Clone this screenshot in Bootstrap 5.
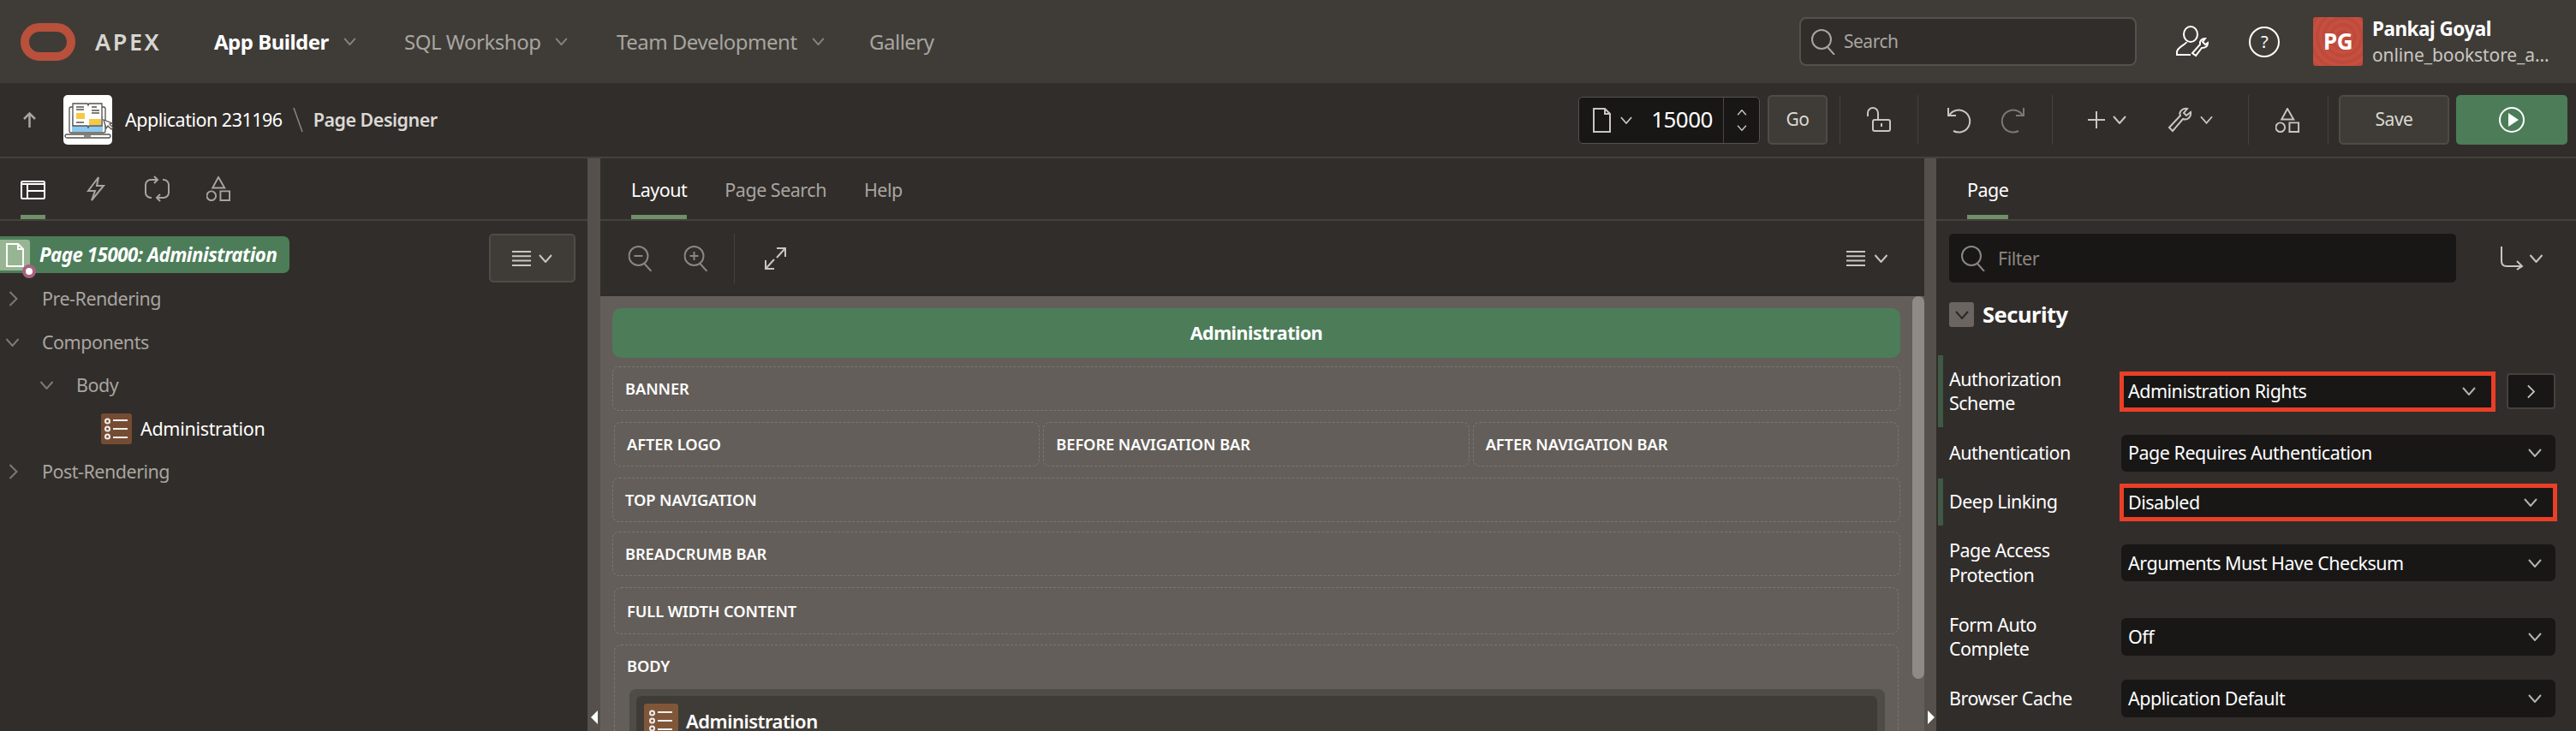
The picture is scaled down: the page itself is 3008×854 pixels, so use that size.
<!doctype html>
<html lang="en"><head><meta charset="utf-8"><title>Page Designer</title>
<link href="https://cdn.jsdelivr.net/npm/bootstrap@5.3.0/dist/css/bootstrap.min.css" rel="stylesheet">
<style>
html,body{height:854px;overflow:hidden}
body{width:3008px;background:#312d2a;color:#fff;font-family:"Noto Sans",sans-serif;font-size:21.5px;line-height:1.3;letter-spacing:-.5px}
svg{display:block;flex:none;fill:none;stroke:currentColor;stroke-width:2;overflow:visible}
a{text-decoration:none}
.apx-top{height:97px;background:#3f3c37;padding:0!important;flex-wrap:nowrap;justify-content:flex-start}
.apx-logo{margin-left:24px;color:#b9503c}
.apx-brand{margin-left:23px;width:139px;font-size:27px;font-weight:600;letter-spacing:2.6px;color:#d7d5d1}
.apx-menu .nav-link{display:flex;align-items:center;gap:17px;padding:0;color:#a8a5a0;font-size:24px}
.apx-menu .nav-link.on{color:#fff;font-weight:700}
.apx-menu .nav-link svg{color:#8a8680}
.w-m1{width:222px}.w-m2{width:248px}.w-m3{width:295px}.w-m4{width:90px}
.apx-search{margin-left:996px;width:394px;height:57px;background:#312d2a;border:2px solid #55514c;border-radius:8px;color:#a8a5a0;padding-left:12px;gap:10px;font-size:21px}
.apx-uico{margin-left:44px;color:#fff}
.apx-help{margin-left:49px;width:36px;height:36px;border:2px solid #fff;border-radius:50%;font-size:20px}
.apx-ava{margin-left:39px;width:58px;height:57px;border-radius:3px;font-size:26px;font-weight:700;background:repeating-radial-gradient(circle at 60% 40%,#c64f3f 0 4px,#bd4a3b 4px 8px)}
.apx-user{margin-left:11px;line-height:30px;width:236px}
.apx-user b{display:block;font-size:22.5px;font-weight:700}
.apx-user span{display:block;font-size:21px;color:#c9c6c2;letter-spacing:-.1px}
.apx-sub{height:88px;background:#312d2a;border-bottom:2px solid #45413d}
.apx-up{margin-left:27px;color:#a8a5a0}
.apx-app{margin-left:32px;width:57px;height:58px;background:#fff;border-radius:5px}
.apx-crumb{margin-left:15px;white-space:nowrap;font-size:21.5px}
.apx-slash{margin:0 12px;color:#8a8680}
.apx-cur{font-weight:600;color:#dbd9d5}
.apx-pg{width:212px;height:55px;background:#181716;border:1px solid #55514c;border-radius:5px;color:#c9c6c2}
.apx-pgnum{margin-left:8px;width:86px;font-size:26px;color:#fff}
.apx-spin{width:42px;height:100%;border-left:1px solid #4a4641;justify-content:space-between;padding:14px 0}
.btn.apx-btn{background:#3f3c37;border:2px solid #4f4b46;border-radius:5px;color:#dbd9d5;font-size:21px;height:58px;padding:0;display:flex;align-items:center;justify-content:center;letter-spacing:-.5px}
.apx-sep{width:1px;height:58px;background:#45413d}
.apx-ic{color:#c9c6c2}
.btn.apx-run{background:#4c7d58;border:0;border-radius:5px;width:130px;height:58px;padding:0;margin-left:8px;color:#fff;display:flex;align-items:center;justify-content:center}
.apx-main{height:669px}
.apx-left{width:686px}.apx-split{width:15px;background:#55504b;align-items:flex-end;padding-bottom:8px}
.apx-split.r{width:14px}
.apx-mid{width:1546px}.apx-right{width:747px}
.apx-tabs{height:73px;border-bottom:2px solid #45413d;padding-bottom:0}
.apx-tab{height:71px;display:flex;align-items:center;color:#a8a5a0;position:relative;padding-top:2px}
.apx-tab.on{color:#fff;border-bottom:5px solid #6f9068;padding-top:7px}
.apx-pill{margin-top:3px;width:338px;height:43px;background:#4c7d58;border-radius:0 7px 7px 0;font-weight:700;font-style:italic;white-space:nowrap;font-size:22.3px}
.apx-pgbox{position:relative;width:35px;height:36px;background:#98b593;border-radius:0 3px 3px 0;margin-right:11px;align-self:center}
.apx-dot{position:absolute;right:-7px;bottom:-9px;width:16px;height:16px;border-radius:50%;background:#fff;border:4px solid #a8617f}
.btn.apx-tool{width:101px;height:57px;margin-left:233px;gap:9px;margin-bottom:-6px;color:#c9c6c2}
.apx-node{height:50.5px;color:#a8a5a0;position:relative}
.apx-node svg{color:#7d7974}
.apx-brown{width:36px;height:36px;background:#754c33;border-radius:3px;color:#eee}
.apx-canvas{height:508px;background:#635e59}
.apx-flow{padding:14px 14px 0;overflow:hidden}
.apx-thumb{width:14px;height:447px;background:#8f8a86;border-radius:7px;flex:none}
.apx-head{height:58px;background:#4c7d58;border-radius:10px;font-weight:700}
.apx-reg{height:52px;border:1px dashed #7b7670;border-radius:8px;padding-left:14px;font-weight:600;font-size:18.3px;white-space:nowrap;letter-spacing:-.1px}
.apx-in{margin-left:2px;margin-right:2px}
.apx-bodybox{height:400px;margin-top:12px;align-items:flex-start;padding-top:12px;flex-direction:column}
.apx-p1{margin:15px 25px 0 3px;width:1466px;background:#4f4b46;border-radius:8px 8px 0 0;padding:8px 9px 0 8px}
.apx-p2{background:#3f3c37;border-radius:6px 6px 0 0;height:100px;padding:9px 0 0 9px;font-size:22px;font-weight:600;letter-spacing:-.5px;align-items:flex-start!important}
.apx-p2 .apx-brown{width:40px;height:40px;background:#805639;margin-right:9px}
.apx-p2 span{margin-top:9px;line-height:22px}
.apx-filter{width:592px;height:57px;background:#181716;border-radius:5px;color:#8a8680;padding-left:14px;gap:15px}
.apx-tog{width:29px;height:29px;background:#6a6560;border-radius:3px;color:#2b2825}
.apx-sec{font-size:25.5px;font-weight:700}
.apx-prop{padding-left:2px;line-height:28.5px}
.apx-bar{width:6px;flex:none;align-self:stretch}
.apx-bar.g{background:#3f5a44}
.apx-lbl{margin-left:7px;width:201px;flex:none}
.form-select.apx-pick{background-image:none;background-color:#181716;border:0;border-radius:6px;color:#fff;height:43px;width:507px;padding:0 16px 0 8px;font-size:21.5px;line-height:28px;box-shadow:none}
.form-select.apx-pick svg{color:#b5b2ad}
.form-select.apx-red{border:5px solid #ea3f27;border-radius:0;margin-left:-2px;padding:0 18px 0 5px}
.apx-go{width:57px;height:42px;background:#181716;border:2px solid #45413d;border-radius:4px;margin-left:13px;color:#c9c6c2}
.apx-hnd{color:#fff}
</style></head>
<body>
<svg width="0" height="0" style="position:absolute"><defs>
<symbol id="chev" viewBox="0 0 16 10"><path d="M1 1l7 8 7-8"/></symbol>
<symbol id="chevr" viewBox="0 0 10 18"><path d="M1 1l8 8-8 8"/></symbol>
<symbol id="mag" viewBox="0 0 28 30"><circle cx="12" cy="12" r="11"/><path d="M19 21l8 9"/></symbol>
<symbol id="burger" viewBox="0 0 22 18"><path d="M0 1h22M0 6.300h22M0 11.600h22M0 17h22"/></symbol>
<symbol id="shapes" viewBox="0 0 30 30"><path d="M14.500 1L22 14H7.500z"/><circle cx="6" cy="23.500" r="5.500"/><path d="M17 18h11v11H17z"/></symbol>
</defs></svg>

<nav class="navbar apx-top">
  <svg class="apx-logo" width="64" height="44" viewBox="0 0 64 44" style="stroke-width:10"><rect x="5" y="5" width="54" height="34" rx="17"/></svg>
  <div class="apx-brand">APEX</div>
  <div class="navbar-nav flex-row apx-menu">
    <a class="nav-link on w-m1" href="#">App Builder <svg width="15" height="9"><use href="#chev"/></svg></a>
    <a class="nav-link w-m2" href="#">SQL Workshop <svg width="15" height="9"><use href="#chev"/></svg></a>
    <a class="nav-link w-m3" href="#">Team Development <svg width="15" height="9"><use href="#chev"/></svg></a>
    <a class="nav-link w-m4" href="#">Gallery</a>
  </div>
  <div class="d-flex align-items-center apx-search"><svg width="28" height="30"><use href="#mag"/></svg><span>Search</span></div>
  <svg class="apx-uico" width="38" height="36" viewBox="0 0 38 36"><ellipse cx="19" cy="9" rx="8" ry="9"/><path d="M14 18c0 3-11 6-11 12v3h16M25 34l-4-3 9-10c-1-4 2-7 6-7l-3 4 3 3 3-2c0 4-3 6-7 6l-7 9z"/></svg>
  <div class="d-flex align-items-center justify-content-center apx-help"><span>?</span></div>
  <div class="d-flex align-items-center justify-content-center apx-ava">PG</div>
  <div class="apx-user"><b>Pankaj Goyal</b><span>online_bookstore_a...</span></div>
</nav>

<header class="d-flex align-items-center apx-sub">
  <svg class="apx-up" width="15" height="18" viewBox="0 0 15 18" style="stroke-width:2.500"><path d="M7.500 18V2M1 8l6.500-6.500L14 8"/></svg>
  <div class="apx-app"><svg width="57" height="58" viewBox="0 0 57 58" style="stroke-width:1.300;color:#55514c">
    <rect x="7" y="14" width="42" height="30" rx="2"/><path fill="#8cc9ee" stroke="none" d="M10 24h36v19H10z"/>
    <path fill="#fff" d="M11 10h17l1 2 1-2h15v26H30l-1 2-1-2H11z"/><path d="M15 14h9M15 17h9M33 14h6M33 18h9M33 21h9M15 32h9M33 37"/>
    <path fill="#f6c945" stroke="none" d="M15 21h10v7H15zM30 28h14v7H30z"/><rect x="2" y="46" width="53" height="4" rx="2"/><path d="M24 48h8"/>
    <path fill="#fff" d="M47 29l3 10 2-3 4 4 2-2-4-4 3-1z"/></svg></div>
  <div class="apx-crumb d-flex align-items-center"><span>Application 231196</span><svg class="apx-slash" width="12" height="28" viewBox="0 0 12 28" style="stroke-width:1.500"><path d="M1 0l10 28"/></svg><span class="apx-cur">Page Designer</span></div>
  <div class="d-flex align-items-center apx-pg ms-auto">
    <svg style="margin-left:16px" width="21" height="29" viewBox="0 0 21 29"><path d="M1 1h13l6 6v21H1zM14 1v6h6"/></svg>
    <svg style="margin-left:11px" width="14" height="9"><use href="#chev"/></svg>
    <span class="apx-pgnum text-end">15000</span>
    <div class="d-flex flex-column align-items-center apx-spin ms-auto"><svg width="12" height="7" style="transform:rotate(180deg)"><use href="#chev"/></svg><svg width="12" height="7"><use href="#chev"/></svg></div>
  </div>
  <button class="btn apx-btn" style="width:70px;margin-left:9px">Go</button>
  <div class="apx-sep" style="margin-left:14px"></div>
  <svg class="apx-ic" style="margin-left:31px" width="28" height="28" viewBox="0 0 28 28"><rect x="7" y="14" width="20" height="13" rx="2"/><path d="M1 10V6a6 6 0 0 1 12 0v8M17 18v4"/></svg>
  <div class="apx-sep" style="margin-left:31px"></div>
  <svg class="apx-ic" style="margin-left:33px" width="28" height="28" viewBox="0 0 28 28"><path d="M3 9A13 13 0 1 1 8 27M2 0v9h9"/></svg>
  <svg style="margin-left:36px;color:#7c7974" width="28" height="28" viewBox="0 0 28 28"><path d="M25 9A13 13 0 1 0 20 27M26 0v9h-9"/></svg>
  <div class="apx-sep" style="margin-left:31px"></div>
  <svg class="apx-ic" style="margin-left:41px" width="20" height="20" viewBox="0 0 20 20"><path d="M10 0v20M0 10h20"/></svg>
  <svg class="apx-ic" style="margin-left:9px" width="16" height="10"><use href="#chev"/></svg>
  <svg class="apx-ic" style="margin-left:49px" width="29" height="28" viewBox="0 0 29 28"><path d="M5 27l-4-4 13-14c-2-4 2-9 8-8l-4 5 3 3 5-4c1 6-4 10-9 8z"/></svg>
  <svg class="apx-ic" style="margin-left:8px" width="15" height="10"><use href="#chev"/></svg>
  <div class="apx-sep" style="margin-left:41px"></div>
  <svg class="apx-ic" style="margin-left:31px" width="29" height="29"><use href="#shapes"/></svg>
  <div class="apx-sep" style="margin-left:32px"></div>
  <button class="btn apx-btn" style="width:129px;margin-left:12px;margin-right:0">Save</button>
  <button class="btn apx-run"><svg width="30" height="30" viewBox="0 0 30 30"><circle cx="15" cy="15" r="14"/><path fill="#fff" stroke="none" d="M11 7l12 8-12 8z"/></svg></button>
  <div style="width:10px;flex:none"></div>
</header>

<main class="d-flex apx-main">
  <section class="apx-left flex-none">
    <div class="d-flex apx-tabs align-items-center" style="padding-left:24px">
      <div class="apx-tab on" style="width:29px"><svg class="apx-hnd" width="29" height="22" viewBox="0 0 29 22"><rect x="1" y="1" width="27" height="20" rx="1.500"/><path d="M1 4h27M8 4v17M8 12h20"/></svg></div>
      <svg style="margin-left:48px;color:#a8a5a0" width="21" height="29" viewBox="0 0 21 29"><path d="M14 1L2 17h8L6 28l14-17h-8z"/></svg>
      <svg style="margin-left:47px;color:#a8a5a0" width="29" height="29" viewBox="0 0 29 29"><path d="M15 4H7a6 6 0 0 0-6 6v9a6 6 0 0 0 6 6h1M14 25h8a6 6 0 0 0 6-6v-9a6 6 0 0 0-6-6h-1M11 0l4 4-4 4M18 21l-4 4 4 4"/></svg>
      <svg style="margin-left:43px;color:#a8a5a0" width="29" height="29"><use href="#shapes"/></svg>
    </div>
    <div class="d-flex align-items-start" style="padding-top:15px">
      <div class="d-flex align-items-center apx-pill"><div class="apx-pgbox d-flex align-items-center justify-content-center"><svg width="21" height="28" viewBox="0 0 21 28" style="color:#fff"><path d="M1 1h13l6 6v20H1zM14 1v6h6"/></svg><div class="apx-dot"></div></div>Page 15000: Administration</div>
      <button class="btn apx-btn apx-tool"><svg width="22" height="18"><use href="#burger"/></svg><svg width="16" height="10"><use href="#chev"/></svg></button>
    </div>
    <div class="d-flex align-items-center apx-node"><svg style="margin-left:10px;margin-right:28px" width="11" height="18" viewBox="0 0 10 18"><path d="M1 1l8 8-8 8"/></svg>Pre-Rendering</div>
    <div class="d-flex align-items-center apx-node"><svg style="margin-left:6px;margin-right:26px" width="17" height="10"><use href="#chev"/></svg>Components</div>
    <div class="d-flex align-items-center apx-node"><svg style="margin-left:46px;margin-right:26px" width="17" height="10"><use href="#chev"/></svg>Body</div>
    <div class="d-flex align-items-center apx-node text-white" style="padding-left:118px"><div class="apx-brown d-flex align-items-center justify-content-center me-2"><svg style="color:#eee" width="28" height="28" viewBox="0 0 28 28"><circle cx="3.500" cy="5" r="2.500"/><circle cx="3.500" cy="14" r="2.500"/><circle cx="3.500" cy="23" r="2.500"/><path d="M10 4h17M10 14h17M10 24h17"/></svg></div><span style="margin-left:2px;letter-spacing:-.3px">Administration</span></div>
    <div class="d-flex align-items-center apx-node"><svg style="margin-left:10px;margin-right:28px" width="11" height="18" viewBox="0 0 10 18"><path d="M1 1l8 8-8 8"/></svg>Post-Rendering</div>
  </section>
  <div class="d-flex apx-split flex-none"><svg width="8" height="16" viewBox="0 0 8 16" style="margin-left:4px;fill:#fff;stroke:none"><path d="M8 0v16L0 8z"/></svg></div>
  <section class="apx-mid flex-none">
    <div class="d-flex apx-tabs" style="padding-left:36px;gap:44px">
      <div class="apx-tab on">Layout</div><div class="apx-tab">Page Search</div><div class="apx-tab">Help</div>
    </div>
    <div class="d-flex align-items-center" style="height:88px">
      <svg style="margin-left:32px;color:#8a8680" width="29" height="30" viewBox="0 0 28 30"><use href="#mag"/><path d="M7 12h10"/></svg>
      <svg style="margin-left:36px;color:#8a8680" width="29" height="30" viewBox="0 0 28 30"><use href="#mag"/><path d="M7 12h10M12 7v10"/></svg>
      <div class="apx-sep" style="margin-left:30px"></div>
      <svg class="apx-ic" style="margin-left:35px" width="25" height="26" viewBox="0 0 25 26"><path d="M14 1h10v10M24 1L14 12M11 25H1V15M1 25l10-11"/></svg>
      <svg class="apx-ic ms-auto" width="22" height="18"><use href="#burger"/></svg>
      <svg class="apx-ic" style="margin-left:10px;margin-right:42px" width="17" height="10"><use href="#chev"/></svg>
    </div>
    <div class="d-flex apx-canvas">
      <div class="flex-grow-1 apx-flow" style="min-width:0">
        <div class="d-flex align-items-center justify-content-center apx-head">Administration</div>
        <div class="d-flex align-items-center apx-reg" style="margin-top:10px">BANNER</div>
        <div class="row g-0" style="margin-top:13px">
          <div class="col-4" style="padding:0 2px"><div class="d-flex align-items-center apx-reg">AFTER LOGO</div></div>
          <div class="col-4" style="padding:0 2px"><div class="d-flex align-items-center apx-reg">BEFORE NAVIGATION BAR</div></div>
          <div class="col-4" style="padding:0 2px"><div class="d-flex align-items-center apx-reg">AFTER NAVIGATION BAR</div></div>
        </div>
        <div class="d-flex align-items-center apx-reg" style="margin-top:13px">TOP NAVIGATION</div>
        <div class="d-flex align-items-center apx-reg" style="margin-top:11px">BREADCRUMB BAR</div>
        <div class="d-flex align-items-center apx-reg apx-in" style="margin-top:13px;height:55px">FULL WIDTH CONTENT</div>
        <div class="d-flex apx-reg apx-in apx-bodybox">
          <div>BODY</div>
          <div class="apx-p1 flex-none"><div class="d-flex align-items-center apx-p2"><div class="apx-brown d-flex align-items-center justify-content-center"><svg style="color:#eee" width="28" height="28" viewBox="0 0 28 28"><circle cx="3.500" cy="5" r="2.500"/><circle cx="3.500" cy="14" r="2.500"/><circle cx="3.500" cy="23" r="2.500"/><path d="M10 4h17M10 14h17M10 24h17"/></svg></div><span>Administration</span></div></div>
        </div>
      </div>
      <div class="apx-thumb"></div>
    </div>
  </section>
  <div class="d-flex apx-split r flex-none"><svg width="8" height="16" viewBox="0 0 8 16" style="margin-left:4px;fill:#fff;stroke:none"><path d="M0 0v16l8-8z"/></svg></div>
  <section class="apx-right flex-none">
    <div class="d-flex apx-tabs" style="padding-left:36px"><div class="apx-tab on">Page</div></div>
    <div class="d-flex align-items-center" style="padding:15px 0 0 15px">
      <div class="d-flex align-items-center apx-filter"><svg width="28" height="30"><use href="#mag"/></svg><span>Filter</span></div>
      <svg class="apx-ic" style="margin-left:52px" width="26" height="27" viewBox="0 0 26 27"><path d="M1 0v17q0 6 6 6h18M19 17l6 6-6 4"/></svg>
      <svg class="apx-ic" style="margin-left:7px" width="17" height="10"><use href="#chev"/></svg>
    </div>
    <div class="d-flex align-items-center" style="padding:21px 0 0 15px;gap:10px"><div class="d-flex align-items-center justify-content-center apx-tog"><svg width="16" height="10"><use href="#chev"/></svg></div><span class="apx-sec">Security</span></div>
    <div style="height:31px"></div>
    <div class="d-flex align-items-center apx-prop" style="height:84px"><div class="apx-bar g"></div><div class="apx-lbl">Authorization<br>Scheme</div>
      <div class="form-select apx-pick apx-red d-flex align-items-center justify-content-between" style="width:439px;height:47px"><span>Administration Rights</span><svg width="16" height="10"><use href="#chev"/></svg></div><div class="d-flex align-items-center justify-content-center apx-go"><svg width="9" height="17"><use href="#chevr"/></svg></div></div>
    <div class="d-flex align-items-center apx-prop" style="height:60px"><div class="apx-bar"></div><div class="apx-lbl">Authentication</div>
      <div class="form-select apx-pick d-flex align-items-center justify-content-between"><span>Page Requires Authentication</span><svg width="16" height="10"><use href="#chev"/></svg></div></div>
    <div class="d-flex align-items-center apx-prop" style="height:55px"><div class="apx-bar g"></div><div class="apx-lbl">Deep Linking</div>
      <div class="form-select apx-pick apx-red d-flex align-items-center justify-content-between" style="width:511px;height:44px"><span>Disabled</span><svg width="16" height="10"><use href="#chev"/></svg></div></div>
    <div class="d-flex align-items-center apx-prop" style="height:87px"><div class="apx-bar"></div><div class="apx-lbl">Page Access<br>Protection</div>
      <div class="form-select apx-pick d-flex align-items-center justify-content-between"><span>Arguments Must Have Checksum</span><svg width="16" height="10"><use href="#chev"/></svg></div></div>
    <div class="d-flex align-items-center apx-prop" style="height:86px"><div class="apx-bar"></div><div class="apx-lbl">Form Auto<br>Complete</div>
      <div class="form-select apx-pick d-flex align-items-center justify-content-between" style="height:44px"><span>Off</span><svg width="16" height="10"><use href="#chev"/></svg></div></div>
    <div class="d-flex align-items-center apx-prop" style="height:58px"><div class="apx-bar"></div><div class="apx-lbl">Browser Cache</div>
      <div class="form-select apx-pick d-flex align-items-center justify-content-between" style="height:44px"><span>Application Default</span><svg width="16" height="10"><use href="#chev"/></svg></div></div>
  </section>
</main>
<script src="https://cdn.jsdelivr.net/npm/bootstrap@5.3.0/dist/js/bootstrap.bundle.min.js"></script>
</body></html>
